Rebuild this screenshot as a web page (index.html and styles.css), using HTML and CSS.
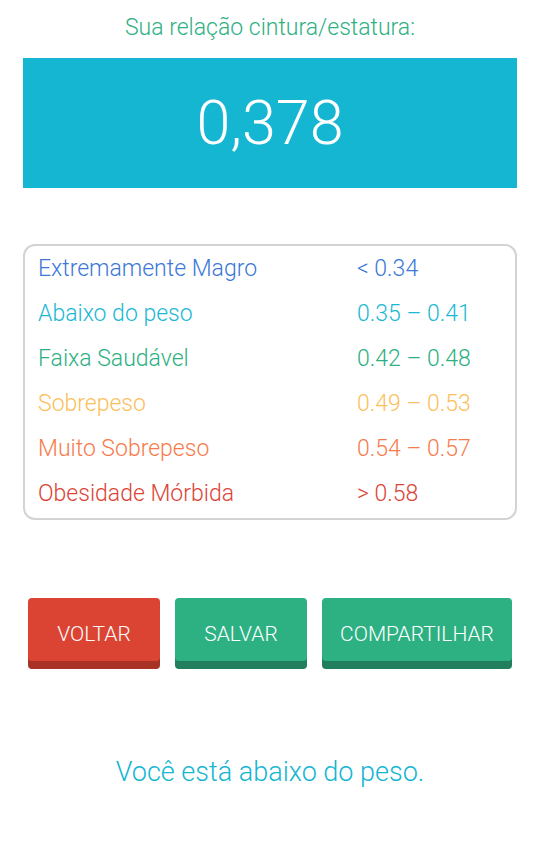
FILE: index.html
```html
<!DOCTYPE html>
<html lang="pt">
  <head>
    <meta charset="UTF-8" />
    <meta name="viewport" content="width=device-width, initial-scale=1.0" />
    <title>Relação cintura/estatura</title>
    <link rel="stylesheet" href="styles.css">
  </head>
  <body>
    <div class="page">
      <h2 class="label">Sua relação cintura/estatura:</h2>
      <div class="result">0,378</div>

      <!-- Tabela de referência -->
      <div class="ranges">
        <div class="row extreme"><span>Extremamente Magro</span><span class="value">&lt; 0.34</span></div>
        <div class="row under"><span>Abaixo do peso</span><span class="value">0.35 – 0.41</span></div>
        <div class="row healthy"><span>Faixa Saudável</span><span class="value">0.42 – 0.48</span></div>
        <div class="row over"><span>Sobrepeso</span><span class="value">0.49 – 0.53</span></div>
        <div class="row very-over"><span>Muito Sobrepeso</span><span class="value">0.54 – 0.57</span></div>
        <div class="row morbid"><span>Obesidade Mórbida</span><span class="value">&gt; 0.58</span></div>
      </div>

      <div class="actions">
        <button class="button back">VOLTAR</button>
        <button class="button save">SALVAR</button>
        <button class="button share">COMPARTILHAR</button>
      </div>

      <p class="verdict">Você está abaixo do peso.</p>
    </div>
  </body>
</html>
```

FILE: styles.css
```css
body {
  margin: 0;
  background-color: white;
  font-family: Roboto, "Noto Sans", sans-serif;
  font-weight: 300;
}

.page {
  padding: 0 23px;
}

.label {
  margin: 0;
  padding-top: 14px;
  height: 58px;
  box-sizing: border-box;
  text-align: center;
  font-size: 23px;
  font-weight: 300;
  line-height: 28px;
  color: #2eb082;
}

.result {
  height: 130px;
  background-color: #14b6d2;
  color: white;
  font-size: 61px;
  line-height: 130px;
  text-align: center;
}

.ranges {
  margin-top: 56px;
  border: 2px solid #d3d3d3;
  border-radius: 12px;
  padding: 0 13px 2px;
}

.row {
  display: flex;
  height: 45px;
  align-items: center;
  font-size: 23px;
}

.row span:first-child {
  width: 319px;
}

.extreme { color: #3b78d8; }
.under { color: #1ab8d4; }
.healthy { color: #2eb082; }
.over { color: #fbc05a; }
.very-over { color: #f67b4c; }
.morbid { color: #db4437; }

.actions {
  display: flex;
  gap: 15px;
  margin-top: 78px;
  padding: 0 5px;
}

.button {
  height: 63px;
  padding: 8px 0 0;
  border: none;
  border-radius: 4px;
  color: white;
  font-family: Roboto, "Noto Sans", sans-serif;
  font-weight: 300;
  font-size: 21px;
  cursor: pointer;
}

.back {
  width: 132px;
  background-color: #db4433;
  box-shadow: 0 8px 0 #a93226;
}

.save {
  width: 132px;
  background-color: #2db183;
  box-shadow: 0 8px 0 #217f5e;
}

.share {
  width: 190px;
  background-color: #2db183;
  box-shadow: 0 8px 0 #217f5e;
}

.verdict {
  margin: 95px 0 0;
  text-align: center;
  font-size: 27px;
  line-height: 32px;
  color: #14b6d2;
}
```
